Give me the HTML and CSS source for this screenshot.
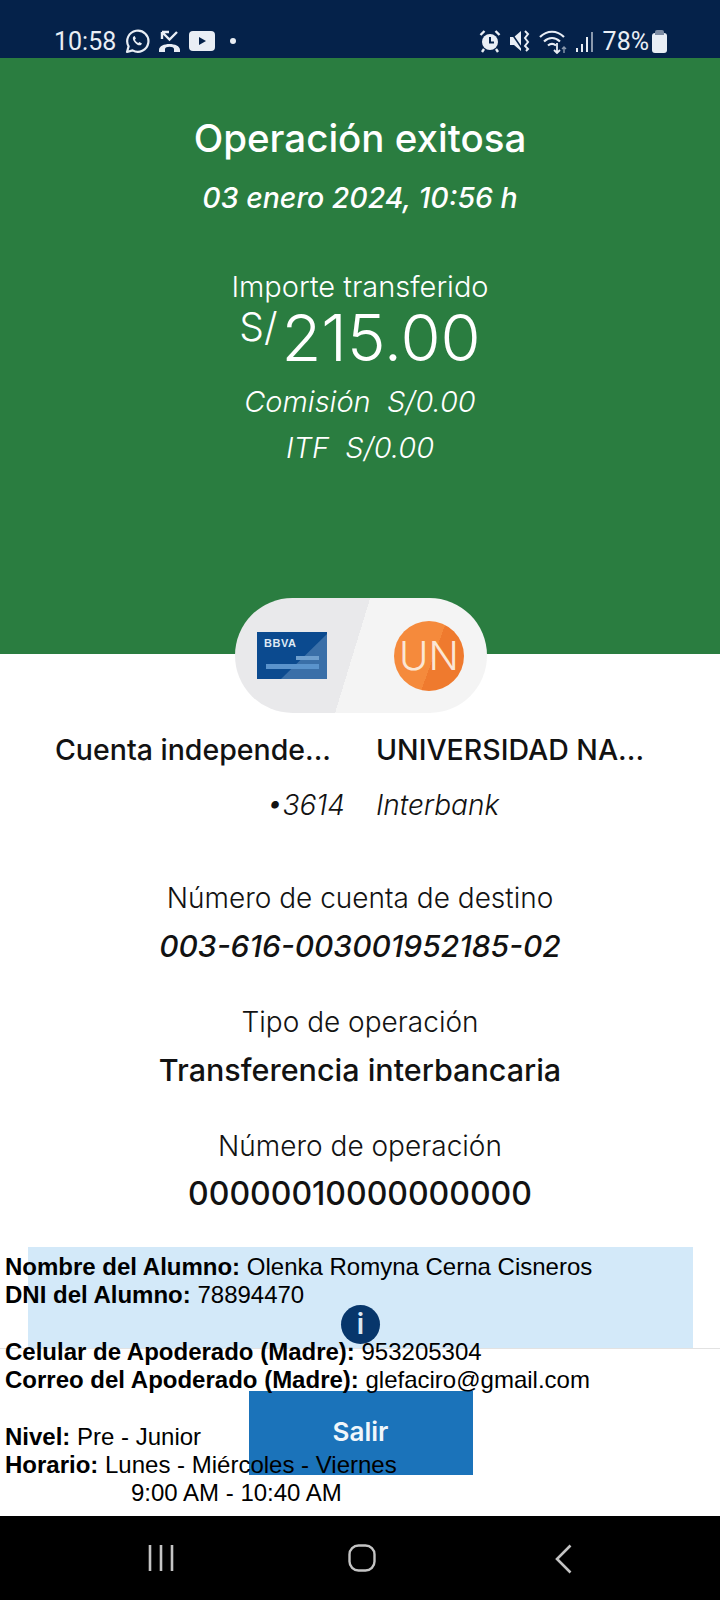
FILE: index.html
```html
<!DOCTYPE html>
<html lang="es">
<head>
    <meta charset="UTF-8">
    <meta name="viewport" content="width=device-width, initial-scale=1.0">
    <title>Operación exitosa</title>
    <link rel="stylesheet" href="styles.css">
</head>
<body>
    <div class="screen">
        <div class="status-bar">
            <div class="status-left">
                <span class="clock">10:58</span>
                <svg class="icon" width="25" height="25" viewBox="0 0 25 25" fill="none" stroke="#e9eef5" stroke-width="2.2">
                    <path d="M2 23l1.6-5.6A10.6 10.6 0 1 1 7.6 21.4z" stroke-linejoin="round"/>
                    <path d="M8.6 7.4c-1.4 1.2-.9 3.6 1.2 6 2.2 2.4 4.6 3.6 6.2 2.6l1-1.4-2.6-1.6-1.1 1c-1.2-.3-2.8-1.900-3.400-3.300l1-1.100-1.200-2.600z" fill="#e9eef5" stroke="none"/>
                </svg>
                <svg class="icon icon-missed" width="23" height="24" viewBox="0 0 23 24" fill="none" stroke="#e9eef5">
                    <path d="M4 3l7.500 7.500L19 3M4 3v7M4 3h7" stroke-width="2.400"/>
                    <path d="M1 21c0-8 21-8 21 0v2h-6v-3c0-3-9-3-9 0v3H1z" fill="#e9eef5" stroke="none"/>
                </svg>
                <svg class="icon icon-video" width="26" height="20" viewBox="0 0 26 20">
                    <rect width="26" height="20" rx="4" fill="#e9eef5"/>
                    <path d="M10 6l7 4-7 4z" fill="#05224a"/>
                </svg>
                <span class="status-dot"></span>
            </div>
            <div class="status-right">
                <svg class="icon" width="22" height="24" viewBox="0 0 22 24" fill="none" stroke="#e9eef5">
                    <circle cx="11" cy="13" r="8" fill="#e9eef5" stroke="none"/>
                    <path d="M11 8v5.500h4" stroke="#05224a" stroke-width="2"/>
                    <path d="M1.500 6l4-4M20.500 6l-4-4M5 20l-2 3M17 20l2 3" stroke-width="2.400"/>
                </svg>
                <svg class="icon" width="22" height="24" viewBox="0 0 22 24" fill="none" stroke="#e9eef5">
                    <path d="M1 8h4l7-6v20l-7-6H1z" fill="#e9eef5" stroke="none"/>
                    <path d="M1 2l13 19" stroke="#05224a" stroke-width="1.500"/>
                    <path d="M16 2l3 3-3 4 3 4-3 4 3 3-2 2" stroke-width="2"/>
                </svg>
                <svg class="icon icon-wifi" width="28" height="26" viewBox="0 0 28 26" fill="none" stroke="#e9eef5" stroke-width="2.200">
                    <path d="M1 9c7-7 17-7 24 0M5 13.500c5-4.500 11-4.500 16 0M9 17.500c3-2.500 5-2.500 8 0"/>
                    <path d="M18 15v10M15 22l3 3 3-3" stroke-width="1.800"/>
                    <path d="M25 25v-6M23 21l2-2 2 2" stroke="#8a99ad" stroke-width="1.400"/>
                </svg>
                <svg class="icon icon-signal" width="18" height="24" viewBox="0 0 18 24" stroke="#e9eef5" stroke-width="2">
                    <path d="M2 23v-4M7 23v-8M12 23V8"/>
                    <path d="M17 23V3" stroke="#8a99ad"/>
                </svg>
                <span class="battery-text">78%</span>
                <span class="battery"></span>
            </div>
        </div>

        <section class="hero">
            <h1 class="hero-title">Operación exitosa</h1>
            <p class="hero-date">03 enero 2024, 10:56 h</p>
            <p class="hero-label">Importe transferido</p>
            <p class="hero-amount"><span class="currency">S/</span>215.00</p>
            <p class="hero-fee">Comisión&nbsp; S/0.00</p>
            <p class="hero-fee">ITF&nbsp; S/0.00</p>
        </section>

        <div class="transfer-pill">
            <svg width="70" height="47" viewBox="0 0 70 47">
                <rect width="70" height="47" fill="#0b4a8f"/>
                <path d="M70 2v45H24z" fill="#3a6fa8"/>
                <path d="M39 24h23v4H39z" fill="#6f9fce"/>
                <path d="M9 32h53v5H9z" fill="#5a93cc"/>
                <text x="7" y="15" class="card-brand">BBVA</text>
            </svg>
            <div class="bank-circle">UN</div>
        </div>

        <div class="parties">
            <div class="party party-from">
                <div class="party-name">Cuenta independe...</div>
                <div class="party-sub">•3614</div>
            </div>
            <div class="party">
                <div class="party-name">UNIVERSIDAD NA...</div>
                <div class="party-sub">Interbank</div>
            </div>
        </div>

        <div class="detail-group">
            <div class="detail">
                <div class="detail-label">Número de cuenta de destino</div>
                <div class="detail-value detail-italic">003-616-003001952185-02</div>
            </div>
            <div class="detail">
                <div class="detail-label">Tipo de operación</div>
                <div class="detail-value">Transferencia interbancaria</div>
            </div>
            <div class="detail">
                <div class="detail-label">Número de operación</div>
                <div class="detail-value detail-number">00000010000000000</div>
            </div>
        </div>

        <div class="notice">
            <span class="notice-icon">i</span>
        </div>
        <div class="footer">
            <button type="button" class="btn">Salir</button>
        </div>
        <div class="nav-bar">
            <svg width="26" height="28" viewBox="0 0 26 28" stroke="#c4c4c4" stroke-width="2.600">
                <path d="M2 1v26M13 1v26M24 1v26"/>
            </svg>
            <svg width="28" height="28" viewBox="0 0 28 28" fill="none" stroke="#c4c4c4" stroke-width="2.400">
                <rect x="1.500" y="1.500" width="25" height="25" rx="9"/>
            </svg>
            <svg class="nav-back" width="17" height="30" viewBox="0 0 17 30" fill="none" stroke="#c4c4c4" stroke-width="2.600">
                <path d="M15.500 1.500L2 15l13.500 13.500"/>
            </svg>
        </div>

        <div class="student-info">
            <div><b>Nombre del Alumno:</b> Olenka Romyna Cerna Cisneros</div>
            <div><b>DNI del Alumno:</b> 78894470</div>
            <br>
            <div><b>Celular de Apoderado (Madre):</b> 953205304</div>
            <div><b>Correo del Apoderado (Madre):</b> glefaciro@gmail.com</div>
            <br>
            <div><b>Nivel:</b> Pre - Junior</div>
            <div><b>Horario:</b> Lunes - Miércoles - Viernes</div>
            <div class="student-time">9:00 AM - 10:40 AM</div>
        </div>
    </div>
</body>
</html>
```

FILE: styles.css
```css
body {
    margin: 0;
    font-family: Inter, "Open Sans", sans-serif;
    background-color: #fff;
}
.screen {
    position: relative;
    width: 720px;
    height: 1600px;
    overflow: hidden;
    display: flex;
    flex-direction: column;
}
p, h1 {
    margin: 0;
}
.status-bar {
    height: 58px;
    flex: none;
    background-color: #05224a;
    color: #e9eef5;
    font-family: Roboto, sans-serif;
    display: flex;
    justify-content: space-between;
    box-sizing: border-box;
    padding: 28px 53px 0 54px;
}
.status-left, .status-right {
    display: flex;
    align-items: center;
    height: 26px;
    gap: 8px;
}
.clock {
    font-size: 25px;
    margin-right: 1px;
}
.status-dot {
    width: 6px;
    height: 6px;
    border-radius: 50%;
    background-color: #e9eef5;
    margin-left: 7px;
}
.battery-text {
    font-size: 25px;
    margin-left: 2px;
}
.battery {
    width: 15px;
    height: 20px;
    margin-left: -5px;
    margin-top: 3px;
    border-radius: 3px;
    background-color: #e9eef5;
    position: relative;
}
.battery::before {
    content: "";
    position: absolute;
    left: 3px;
    top: -3px;
    width: 9px;
    height: 5px;
    border-radius: 2px 2px 0 0;
    background-color: #7d8ca3;
}
.hero {
    height: 596px;
    flex: none;
    box-sizing: border-box;
    padding-top: 55px;
    background-color: #2a7d40;
    color: #fff;
    text-align: center;
}
.hero-title {
    font-size: 38.500px;
    line-height: 50px;
    font-weight: 500;
}
.hero-date {
    margin-top: 16px;
    font-size: 28.500px;
    line-height: 38px;
    font-weight: 500;
    font-style: italic;
}
.hero-label {
    margin-top: 53px;
    font-size: 29px;
    line-height: 34px;
    font-weight: 300;
}
.hero-amount {
    margin-bottom: 12px;
    font-size: 65px;
    line-height: 68px;
    font-weight: 300;
}
.currency {
    font-size: 39px;
    vertical-align: 20px;
    line-height: 0;
    margin-right: 4px;
}
.hero-fee {
    margin-top: 10px;
    font-size: 29px;
    line-height: 36px;
    font-weight: 300;
    font-style: italic;
}
.transfer-pill {
    flex: none;
    width: 252px;
    height: 115px;
    margin: -56px 0 0 235px;
    border-radius: 58px;
    box-sizing: border-box;
    padding: 0 23px 0 22px;
    display: flex;
    align-items: center;
    justify-content: space-between;
    background: linear-gradient(107deg, #e9e9eb calc(50% - 8px), #f4f4f4 calc(50% - 8px));
}
.card-brand {
    font-family: "Liberation Sans", sans-serif;
    font-size: 11px;
    font-weight: 700;
    fill: #dfe9f5;
    letter-spacing: .5px;
}
.bank-circle {
    width: 70px;
    height: 70px;
    border-radius: 50%;
    background: linear-gradient(110deg, #f58a3c 55%, #ef7a2e 55%);
    color: #fbe6d4;
    font-size: 40px;
    font-weight: 300;
    line-height: 70px;
    text-align: center;
}
.parties {
    flex: none;
    display: grid;
    grid-template-columns: 345px 1fr;
    column-gap: 31px;
    margin-top: 17px;
    color: #121212;
}
.party-from {
    text-align: right;
}
.party-from .party-name {
    padding-right: 14px;
}
.party-name {
    font-size: 28.500px;
    line-height: 40px;
    font-weight: 500;
}
.party-sub {
    margin-top: 15px;
    font-size: 28px;
    line-height: 40px;
    font-weight: 300;
    font-style: italic;
}
.detail-group {
    flex: none;
    margin-top: 53px;
    display: flex;
    flex-direction: column;
    gap: 36px;
    text-align: center;
    color: #121212;
}
.detail-label {
    font-size: 28px;
    line-height: 40px;
    font-weight: 300;
}
.detail-value {
    margin-top: 8px;
    font-size: 30.500px;
    line-height: 40px;
    font-weight: 500;
}
.detail-italic {
    font-style: italic;
    font-size: 30px;
}
.detail-number {
    font-size: 32px;
}
.notice {
    flex: none;
    box-sizing: border-box;
    height: 101px;
    margin: 33px 27px 0 28px;
    padding-top: 58px;
    background-color: #d3e9f9;
    display: flex;
    justify-content: center;
}
.notice-icon {
    width: 39px;
    height: 39px;
    border-radius: 50%;
    background-color: #07366b;
    color: #dbe8f4;
    font-size: 28px;
    font-weight: 600;
    line-height: 39px;
    text-align: center;
}
.footer {
    flex: 1;
    border-top: 1px solid #e2e2e2;
    display: flex;
    justify-content: center;
    align-items: flex-start;
    padding-top: 42px;
    padding-left: 1px;
}
.btn {
    width: 224px;
    height: 84px;
    padding: 0 0 4px;
    border: none;
    background-color: #1b73ba;
    color: #f0f6fb;
    font-family: Inter, sans-serif;
    font-size: 26px;
    font-weight: 600;
}
.nav-bar {
    height: 84px;
    flex: none;
    background-color: #000;
    display: flex;
    gap: 174px;
    align-items: flex-start;
    box-sizing: border-box;
    padding: 28px 0 0 148px;
}
.nav-back {
    margin-left: 5px;
}
.student-info {
    position: absolute;
    left: 5px;
    top: 1253px;
    font-family: "Liberation Sans", sans-serif;
    font-size: 24px;
    line-height: 28.300px;
    color: #000;
}
.student-time {
    padding-left: 126px;
}
```
